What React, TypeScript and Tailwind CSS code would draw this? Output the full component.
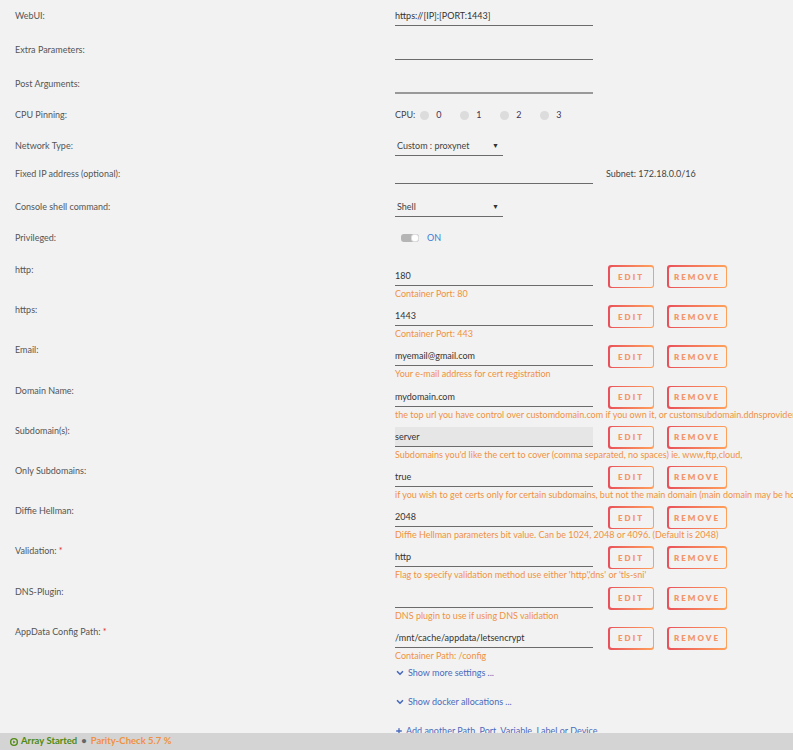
import { ChevronDown, Plus } from "lucide-react"

const configs = [
  { label: "http:", value: "180", desc: "Container Port: 80" },
  { label: "https:", value: "1443", desc: "Container Port: 443" },
  { label: "Email:", value: "myemail@gmail.com", desc: "Your e-mail address for cert registration" },
  {
    label: "Domain Name:",
    value: "mydomain.com",
    desc: "the top url you have control over customdomain.com if you own it, or customsubdomain.ddnsprovider.com if dynamic dns",
  },
  {
    label: "Subdomain(s):",
    value: "server",
    desc: "Subdomains you'd like the cert to cover (comma separated, no spaces) ie. www,ftp,cloud,",
    shaded: true,
  },
  {
    label: "Only Subdomains:",
    value: "true",
    desc: "if you wish to get certs only for certain subdomains, but not the main domain (main domain may be hosted on another machine)",
  },
  {
    label: "Diffie Hellman:",
    value: "2048",
    desc: "Diffie Hellman parameters bit value. Can be 1024, 2048 or 4096. (Default is 2048)",
  },
  {
    label: "Validation:",
    required: true,
    value: "http",
    desc: "Flag to specify validation method use either 'http','dns' or 'tls-sni'",
  },
  { label: "DNS-Plugin:", value: "", desc: "DNS plugin to use if using DNS validation" },
  {
    label: "AppData Config Path:",
    required: true,
    value: "/mnt/cache/appdata/letsencrypt",
    desc: "Container Path: /config",
  },
]

function Label({ text, required }: { text: string; required?: boolean }) {
  return (
    <div className="w-[395px] shrink-0 pl-[15px] leading-[20px] text-[#555]">
      {text}
      {required && <span className="text-[#e22828]"> *</span>}
    </div>
  )
}

function Field({ value, shaded }: { value?: string; shaded?: boolean }) {
  return (
    <div
      className={
        "w-[198px] h-[20px] leading-[20px] border-b border-[#6b6b6b] text-[#333] " +
        (shaded ? "bg-[#e6e6e6]" : "")
      }
    >
      {value}
    </div>
  )
}

function GradButton({ text, width }: { text: string; width: string }) {
  return (
    <div className={"h-[23px] rounded-[3px] p-[1.5px] bg-gradient-to-r from-[#e8505a] to-[#ffa05a] " + width}>
      <div className="h-full w-full rounded-[2px] bg-[#f2f2f2] flex items-center justify-center text-[8px] font-extrabold tracking-[2px] text-[#f4966a]">
        {text}
      </div>
    </div>
  )
}

function Select({ text, width }: { text: string; width: string }) {
  return (
    <div className={"h-[20px] flex items-center justify-between pl-[2px] pr-[4px] border-b border-[#6b6b6b] text-[#444] " + width}>
      <span>{text}</span>
      <span className="text-[7px] text-[#333]">▼</span>
    </div>
  )
}

export default function App() {
  return (
    <div
      className="h-[750px] w-full overflow-hidden bg-[#f2f2f2] text-[9px]"
      style={{ fontFamily: "Lato, 'Open Sans', sans-serif" }}
    >
      <div className="pt-[6px]">
        <div className="flex h-[34px]">
          <Label text="WebUI:" />
          <Field value="https://[IP]:[PORT:1443]" />
        </div>
        <div className="flex h-[34px]">
          <Label text="Extra Parameters:" />
          <Field />
        </div>
        <div className="flex h-[31px]">
          <Label text="Post Arguments:" />
          <div className="w-[198px] h-[20px] border-b-2 border-[#999]" />
        </div>
        <div className="flex h-[31px]">
          <Label text="CPU Pinning:" />
          <div className="flex items-center h-[20px] text-[#444]">
            <span className="mr-[5px]">CPU:</span>
            {["0", "1", "2", "3"].map((n) => (
              <span key={n} className="flex items-center w-[40px]">
                <span className="w-[9px] h-[9px] rounded-full bg-[#dcdcdc] mr-[7px]" />
                <span className="text-[#443355]">{n}</span>
              </span>
            ))}
          </div>
        </div>
        <div className="flex h-[28px]">
          <Label text="Network Type:" />
          <Select text="Custom : proxynet" width="w-[108px]" />
        </div>
        <div className="flex h-[33px]">
          <Label text="Fixed IP address (optional):" />
          <Field />
          <div className="ml-[13px] leading-[20px] text-[#444]">Subnet: 172.18.0.0/16</div>
        </div>
        <div className="flex h-[31px]">
          <Label text="Console shell command:" />
          <Select text="Shell" width="w-[108px]" />
        </div>
        <div className="flex h-[32px]">
          <Label text="Privileged:" />
          <div className="flex items-center h-[20px] pl-[6px]">
            <div className="w-[18px] h-[8px] rounded-[3px] bg-[#b5b5b5] flex justify-end">
              <div className="w-[8px] h-[8px] rounded-[3px] bg-white border border-[#ddd]" />
            </div>
            <span className="ml-[8px] text-[#3b7dd8]">ON</span>
          </div>
        </div>

        {configs.map((c) => (
          <div key={c.label} className="flex h-[40.2px]">
            <Label text={c.label} required={c.required} />
            <div className="flex flex-col pt-[6px]">
              <div className="flex items-start">
                <Field value={c.value} shaded={c.shaded} />
                <div className="ml-[15px] -mt-[1px] flex gap-[13px]">
                  <GradButton text="EDIT" width="w-[46px]" />
                  <GradButton text="REMOVE" width="w-[60px]" />
                </div>
              </div>
              <div className="leading-[12px] whitespace-nowrap text-[#f0913f]">{c.desc}</div>
            </div>
          </div>
        ))}

        <div className="ml-[395px] pt-[1px] flex flex-col text-[#4a6bbd]">
          <div className="flex items-center gap-[3px] h-[20px]">
            <ChevronDown size={10} strokeWidth={4} />
            <span>Show more settings ...</span>
          </div>
          <div className="flex items-center gap-[3px] h-[20px] mt-[9px]">
            <ChevronDown size={10} strokeWidth={4} />
            <span>Show docker allocations ...</span>
          </div>
          <div className="flex items-center gap-[3px] h-[20px] mt-[9px]">
            <Plus size={8} strokeWidth={4} />
            <span>Add another Path, Port, Variable, Label or Device</span>
          </div>
        </div>
      </div>

      <div className="fixed bottom-0 left-0 right-0 h-[17px] bg-[#d4d4d4] flex items-center pl-[10px] text-[9.5px] font-bold">
        <svg width="8" height="8" viewBox="0 0 10 10" className="mr-[3px]">
          <circle cx="5" cy="5" r="5" fill="#4f8a10" />
          <circle cx="5" cy="5" r="3.3" fill="#d4d4d4" />
          <polygon points="4,3 7,5 4,7" fill="#4f8a10" />
        </svg>
        <span className="text-[#4f8a10]">Array Started</span>
        <span className="mx-[4px] text-[#666]">•</span>
        <span className="text-[#f0913f]">Parity-Check 5.7 %</span>
      </div>
    </div>
  )
}
